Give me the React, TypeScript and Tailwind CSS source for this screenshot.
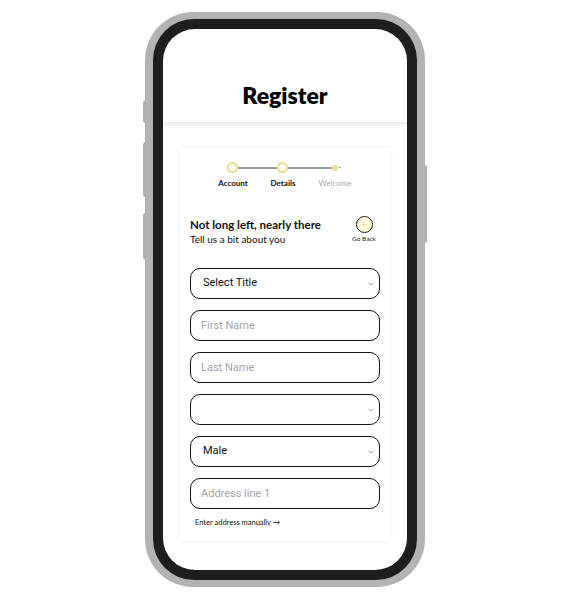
import { ChevronDown, ArrowLeft } from 'lucide-react';

const heading = { fontFamily: '"Lato", "Noto Sans", sans-serif' };
const field = { fontFamily: 'Roboto, "Noto Sans", sans-serif' };

const SelectBox = ({ value }: { value?: string }) => (
  <div
    className="h-[31px] w-full rounded-[10px] border-[1.5px] border-[#111] flex items-center justify-between pl-[12px] pr-[4px] text-[11px] text-[#111]"
    style={field}
  >
    <span>{value}</span>
    <ChevronDown className="w-[8px] h-[8px] text-[#777]" strokeWidth={2} />
  </div>
);

const TextBox = ({ placeholder }: { placeholder: string }) => (
  <input
    type="text"
    placeholder={placeholder}
    className="h-[31px] w-full rounded-[10px] border-[1.5px] border-[#111] px-[10px] text-[11px] text-[#111] placeholder-[#a3a3a8] outline-none bg-white"
    style={field}
  />
);

const App = () => {
  return (
    <div className="w-[570px] h-[600px] bg-white pt-[12px]">
      <div className="relative mx-auto w-[280px] h-[575px] rounded-[48px] bg-[#b3b3b3] px-[8px] py-[7px]">
        {/* side buttons */}
        <div className="absolute left-[-2px] top-[88px] w-[3px] h-[23px] bg-[#b0b0b0] rounded-l-sm" />
        <div className="absolute left-[-2px] top-[130px] w-[3px] h-[55px] bg-[#b0b0b0] rounded-l-sm" />
        <div className="absolute left-[-2px] top-[201px] w-[3px] h-[47px] bg-[#b0b0b0] rounded-l-sm" />
        <div className="absolute right-[-2px] top-[153px] w-[3px] h-[78px] bg-[#b0b0b0] rounded-r-sm" />

        <div className="w-full h-full rounded-[41px] bg-[#1e1e20] p-[10px]">
          <div className="w-[244px] h-[541px] rounded-[32px] bg-white overflow-hidden flex flex-col">
            <header className="h-[94px] flex items-end justify-center pb-[13px] border-b border-[#ececec] shadow-[0_2px_4px_rgba(0,0,0,0.07)]">
              <h1 className="text-[23px] leading-[28px] font-extrabold text-black" style={heading}>
                Register
              </h1>
            </header>

            <div className="mx-[17px] mt-[25px] px-[10px] pt-[14px] pb-[13px] bg-white shadow-[0_0_6px_rgba(0,0,0,0.05)]" style={heading}>
              {/* stepper */}
              <div className="flex items-center pl-[37px]">
                <div className="w-[11px] h-[11px] rounded-full border-2 border-[#f0da8c]" />
                <div className="w-[39px] h-[2px] bg-[#9a9a9a]" />
                <div className="w-[11px] h-[11px] rounded-full border-2 border-[#f0da8c]" />
                <div className="w-[44px] h-[2px] bg-[#9a9a9a]" />
                <div className="w-[6px] h-[6px] rounded-full bg-[#f2dc8e]" />
                <div className="ml-[1px] w-[2px] h-[1px] bg-[#9a9a9a]" />
              </div>
              <div className="flex mt-[5px] pl-[18px] text-[8px] leading-[10px]">
                <span className="w-[50px] text-center font-bold text-[#111]">Account</span>
                <span className="w-[50px] text-center font-bold text-[#111]">Details</span>
                <span className="w-[54px] text-center text-[#a8a8a8]">Welcome</span>
              </div>

              {/* intro */}
              <div className="flex justify-between items-start mt-[29px]">
                <div>
                  <h2 className="text-[11.5px] leading-[15px] font-bold text-[#111]">Not long left, nearly there</h2>
                  <p className="mt-[1px] text-[10px] leading-[13px] text-[#111]">Tell us a bit about you</p>
                </div>
                <div className="w-[32px] flex flex-col items-center -mt-[1px]">
                  <div className="w-[17px] h-[17px] rounded-full border-[1.5px] border-[#1c1c1c] bg-[radial-gradient(circle,#fffbe6_30%,#f6eeb8_100%)] flex items-center justify-center">
                    <ArrowLeft className="w-[7px] h-[7px] text-[#e8d37e]" strokeWidth={2.5} />
                  </div>
                  <span className="mt-[1px] text-[6.5px] leading-[9px] text-[#222] whitespace-nowrap">Go Back</span>
                </div>
              </div>

              {/* form */}
              <div className="mt-[22px] flex flex-col gap-[11px]">
                <SelectBox value="Select Title" />
                <TextBox placeholder="First Name" />
                <TextBox placeholder="Last Name" />
                <SelectBox />
                <SelectBox value="Male" />
                <TextBox placeholder="Address line 1" />
              </div>

              <p className="mt-[9px] pl-[5px] text-[7.5px] leading-[10px] text-[#111]">Enter address manually →</p>
            </div>
          </div>
        </div>
      </div>
    </div>
  );
};

export default App;
